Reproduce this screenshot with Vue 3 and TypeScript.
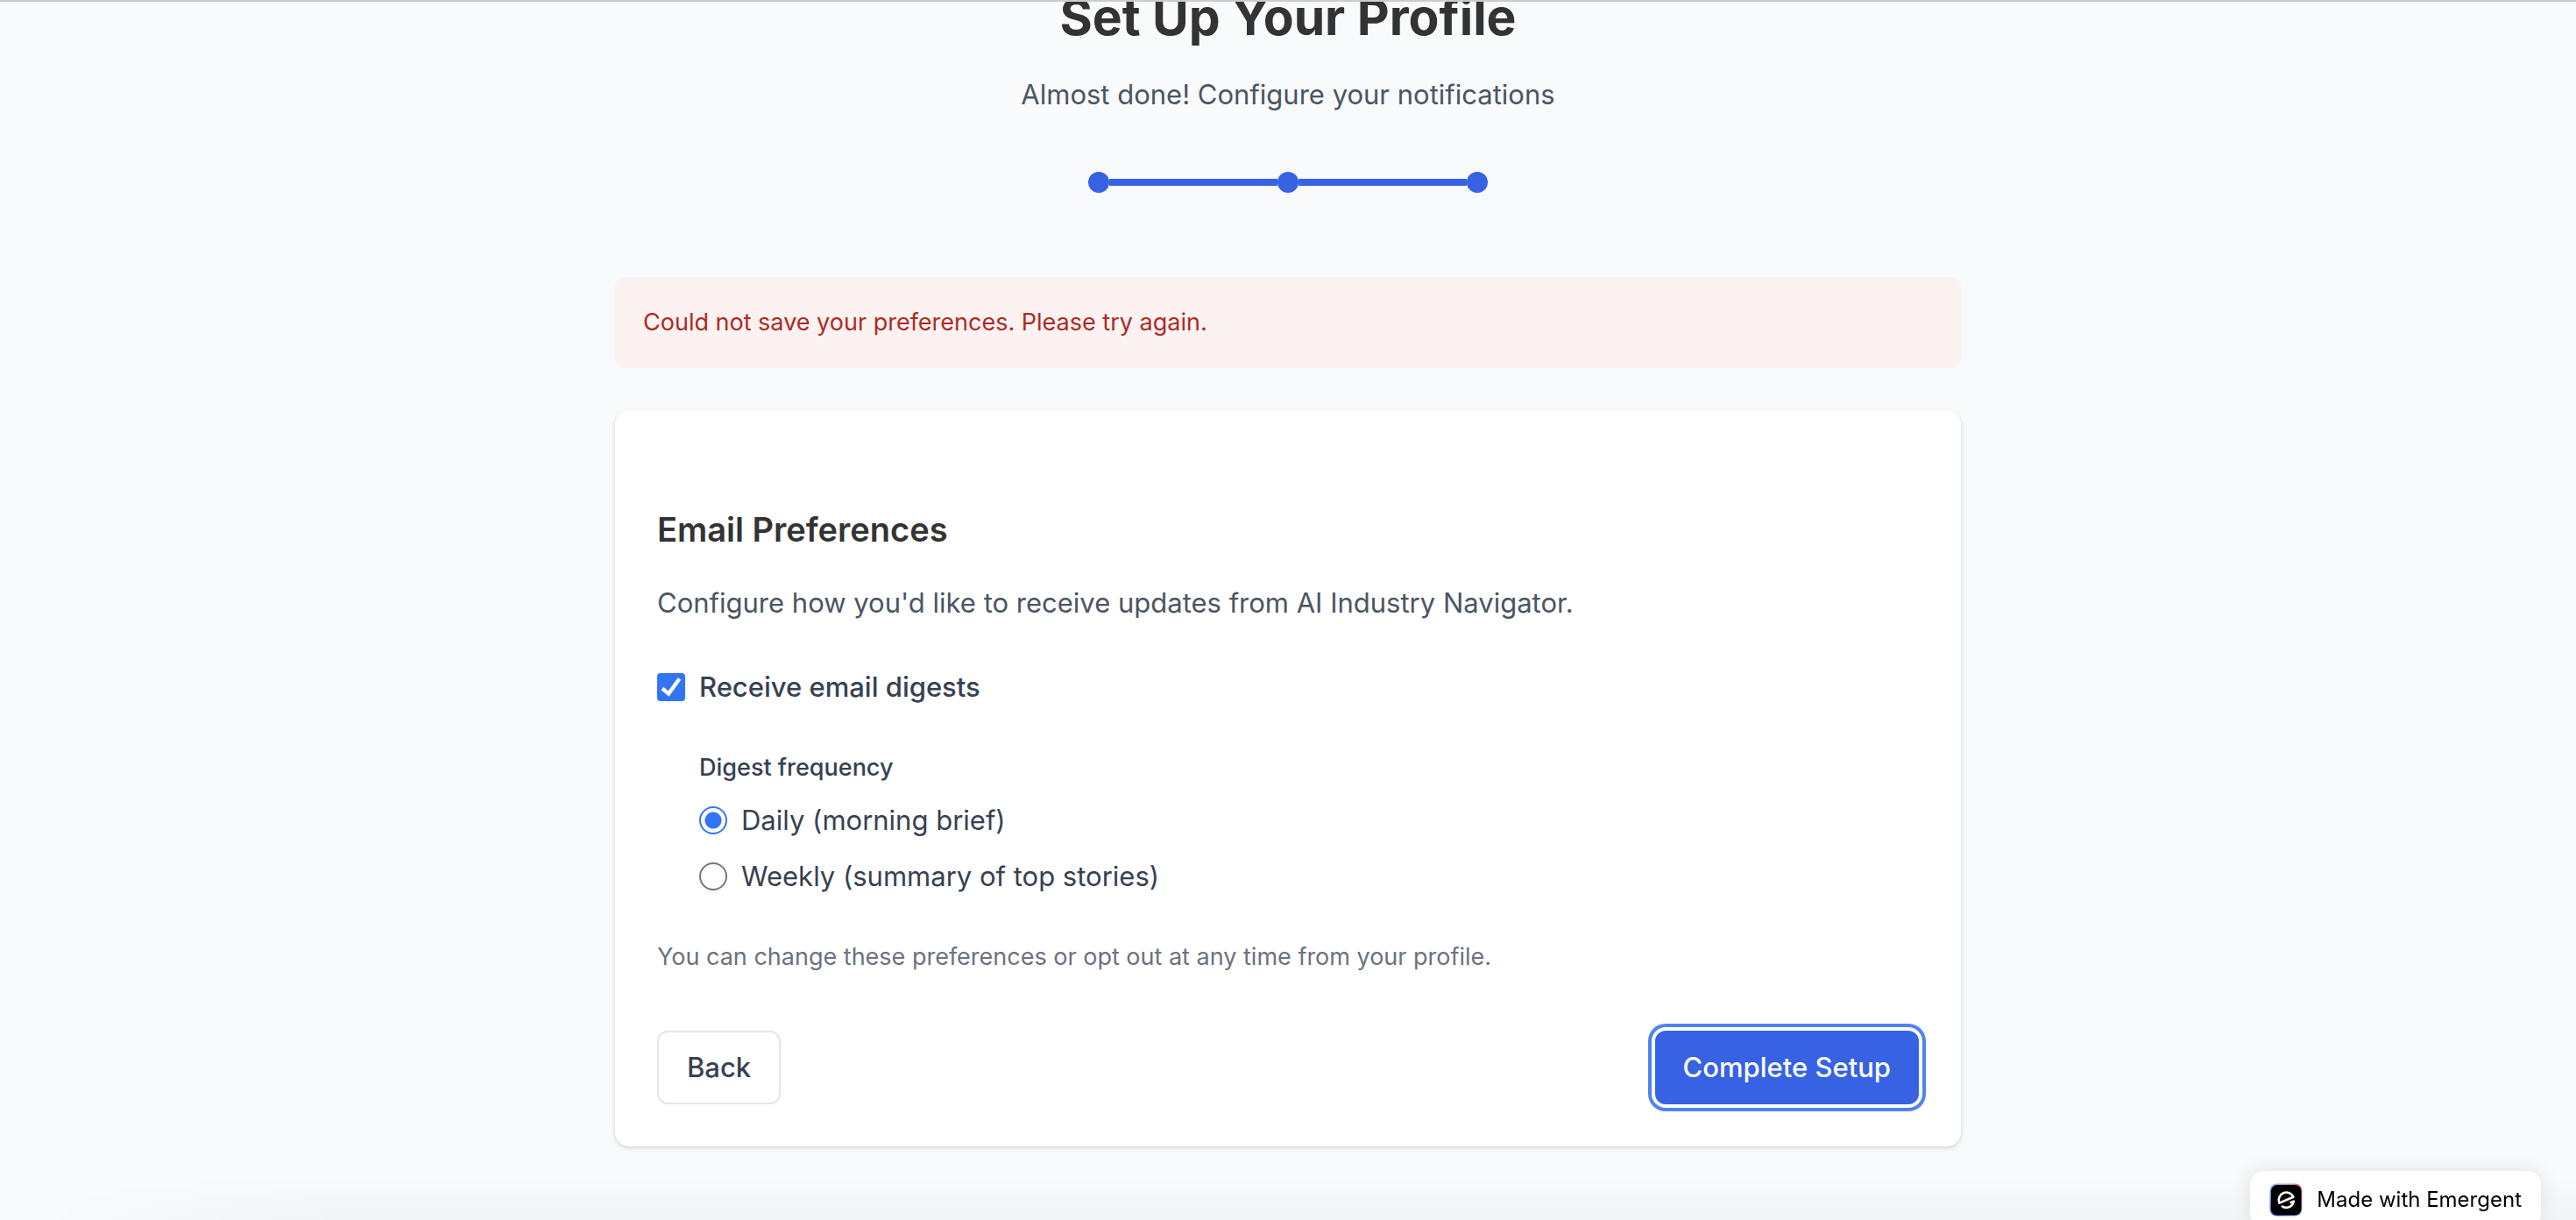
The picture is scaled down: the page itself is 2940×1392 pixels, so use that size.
<script setup lang="ts">
import { ref } from 'vue'

const receiveDigests = ref(true)
const frequency = ref('daily')
const options = [
  { value: 'daily', label: 'Daily (morning brief)' },
  { value: 'weekly', label: 'Weekly (summary of top stories)' },
]
</script>

<template>
  <div class="page">
    <main class="setup">
      <header class="intro">
        <h1>Set Up Your Profile</h1>
        <p>Almost done! Configure your notifications</p>
      </header>

      <div class="steps" aria-label="Step 3 of 3">
        <span class="dot"></span>
        <span class="line"></span>
        <span class="dot"></span>
        <span class="line"></span>
        <span class="dot"></span>
      </div>

      <p class="alert" role="alert">Could not save your preferences. Please try again.</p>

      <form class="card" @submit.prevent>
        <h2>Email Preferences</h2>
        <p class="lead">Configure how you'd like to receive updates from AI Industry Navigator.</p>

        <label class="choice strong" for="digests">
          <input id="digests" v-model="receiveDigests" type="checkbox" />
          Receive email digests
        </label>

        <fieldset class="frequency">
          <legend>Digest frequency</legend>
          <label v-for="o in options" :key="o.value" class="choice" :for="o.value">
            <input :id="o.value" v-model="frequency" type="radio" name="frequency" :value="o.value" />
            {{ o.label }}
          </label>
        </fieldset>

        <p class="note">You can change these preferences or opt out at any time from your profile.</p>

        <div class="actions">
          <button type="button" class="back">Back</button>
          <button type="submit" class="complete">Complete Setup</button>
        </div>
      </form>
    </main>

    <div class="shade"></div>
    <a class="badge" href="#">
      <svg viewBox="0 0 38 38" aria-hidden="true">
        <defs>
          <linearGradient id="glow" x1="1" y1="0" x2="0" y2="1">
            <stop offset="0" stop-color="#f0648c" />
            <stop offset="0.45" stop-color="#8fb4f5" />
            <stop offset="1" stop-color="#3f4fd0" />
          </linearGradient>
        </defs>
        <rect x="0.5" y="0.5" width="37" height="37" rx="8" fill="url(#glow)" />
        <rect x="2" y="2" width="34.5" height="34.5" rx="7" fill="#000" />
        <path d="M11.4 22.6 L27.4 15.8 A8.6 8.6 0 0 0 11.4 22.6 Z M14 26 A8.6 8.6 0 0 0 27.8 20.6 L23.6 22.4" fill="none" stroke="#fff" stroke-width="2.6" stroke-linejoin="round" />
      </svg>
      Made with Emergent
    </a>
  </div>
</template>

<style>
body {
  background: #f9fafc;
}
</style>

<style scoped>
.page {
  box-sizing: border-box;
  height: 100vh;
  overflow: hidden;
  border-top: 2px solid #cccccc;
  background: #f9fafc;
  font-family: Inter, 'Liberation Sans', sans-serif;
  font-size: 31px;
  line-height: 48px;
  color: #374151;
}
h1, h2, p {
  margin: 0;
}
.setup {
  max-width: 1536px;
  margin: -18px auto 0;
}
.intro {
  text-align: center;
}
h1 {
  font-size: 57px;
  line-height: 72px;
  font-weight: 700;
  color: #333333;
}
.intro p {
  margin-top: 28px;
  color: #4b5563;
}
.steps {
  display: flex;
  align-items: center;
  justify-content: center;
  margin-top: 64px;
}
.dot {
  width: 24px;
  height: 24px;
  border-radius: 50%;
  background: #3662e3;
}
.line {
  width: 192px;
  height: 8px;
  background: #3662e3;
}
.alert {
  margin-top: 96px;
  padding: 32px;
  border-radius: 12px;
  background: #fcf2f1;
  font-size: 27px;
  line-height: 40px;
  color: #ac2a25;
}
.card {
  margin-top: 48px;
  padding: 112px 48px 48px;
  border-radius: 16px;
  background: #ffffff;
  box-shadow: 0 2px 6px rgba(0, 0, 0, 0.1), 0 2px 4px rgba(0, 0, 0, 0.06);
}
h2 {
  font-size: 38px;
  line-height: 48px;
  font-weight: 600;
  color: #333333;
}
.lead {
  margin-top: 36px;
  color: #4b5563;
}
.choice {
  display: flex;
  align-items: center;
  gap: 16px;
}
.strong {
  margin-top: 48px;
  font-weight: 500;
}
input {
  appearance: none;
  flex: none;
  width: 32px;
  height: 32px;
  margin: 0;
}
input[type='checkbox'] {
  border-radius: 4px;
}
input[type='checkbox']:checked {
  background: #3374f6 url("data:image/svg+xml,%3Csvg xmlns='http://www.w3.org/2000/svg' viewBox='0 0 32 32'%3E%3Cpath d='M6 17.5 L13 23.5 L25.5 6.5' fill='none' stroke='white' stroke-width='4.4'/%3E%3C/svg%3E") center / 100%;
}
input[type='radio'] {
  border: 2px solid #767676;
  border-radius: 50%;
}
input[type='radio']:checked {
  border-color: #3374f6;
  background: radial-gradient(circle, #3374f6 9px, #ffffff 10px);
}
.frequency {
  display: flex;
  flex-direction: column;
  gap: 16px;
  margin: 48px 0 0 48px;
  padding: 0;
  border: 0;
}
legend {
  margin-bottom: 16px;
  padding: 0;
  font-size: 27px;
  line-height: 40px;
  font-weight: 500;
}
.note {
  margin-top: 48px;
  font-size: 27px;
  line-height: 40px;
  color: #6b7280;
}
.actions {
  display: flex;
  justify-content: space-between;
  margin-top: 64px;
}
button {
  height: 84px;
  padding: 0 32px;
  border: 0;
  border-radius: 12px;
  font: inherit;
  font-weight: 500;
}
.back {
  border: 2px solid #e5e7eb;
  background: #ffffff;
  color: #374151;
}
.complete {
  background: #3662e3;
  color: #ffffff;
  box-shadow: 0 0 0 4px #ffffff, 0 0 0 8px #4f83f1;
}
.shade {
  position: fixed;
  right: 0;
  bottom: 0;
  left: 0;
  height: 48px;
  background: linear-gradient(to bottom, rgba(0, 0, 0, 0), rgba(0, 0, 0, 0.025));
  mask-image: linear-gradient(to right, transparent 40px, #000000 400px);
  pointer-events: none;
}
.badge {
  position: fixed;
  right: 40px;
  bottom: -8px;
  display: flex;
  align-items: center;
  gap: 16px;
  box-sizing: border-box;
  height: 64px;
  padding: 2px 22px 0;
  border-radius: 16px;
  background: #ffffff;
  box-shadow: 0 0 24px rgba(0, 0, 0, 0.1);
  font-size: 24px;
  line-height: 32px;
  color: #000000;
  text-decoration: none;
  white-space: nowrap;
}
.badge svg {
  width: 38px;
  height: 38px;
}
</style>
